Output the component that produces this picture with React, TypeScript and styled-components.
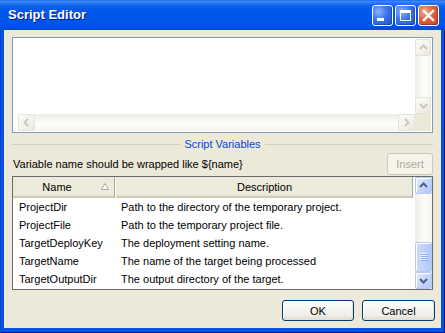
import React from "react";
import styled, { createGlobalStyle } from "styled-components";

const Global = createGlobalStyle`
  html, body { margin: 0; padding: 0; width: 445px; height: 333px; overflow: hidden; background: #fff; }
  * { box-sizing: border-box; }
`;

const Window = styled.div`
  width: 445px;
  height: 333px;
  display: flex;
  flex-direction: column;
  font-family: "Liberation Sans", Arial, sans-serif;
  font-size: 11px;
  color: #000;
`;

const TitleBar = styled.div`
  flex: 0 0 30px;
  display: flex;
  align-items: center;
  gap: 2px;
  padding: 0 6px 0 8px;
  background: linear-gradient(
    to bottom,
    #0a5ae6 0px,
    #3e8ef6 1px,
    #2a78f0 3px,
    #0f61ea 6px,
    #0058ee 10px,
    #0055e8 22px,
    #0050e0 27px,
    #0046d4 30px
  );
`;

const Title = styled.div`
  flex: 1;
  color: #fff;
  font-family: "Liberation Sans", Arial, sans-serif;
  font-weight: bold;
  font-size: 13px;
  text-shadow: 1px 1px 0 #0a1883;
  padding-bottom: 1px;
`;

const CaptionButton = styled.div<{ $close?: boolean }>`
  width: 21px;
  height: 21px;
  border: 1px solid #fff;
  border-radius: 3px;
  display: flex;
  align-items: center;
  justify-content: center;
  background: ${(p) =>
    p.$close
      ? "radial-gradient(circle at 30% 30%, #f3ae95 0%, #e2603a 45%, #c8401c 100%)"
      : "radial-gradient(circle at 30% 30%, #8cb2ff 0%, #3a74f0 45%, #1c50d6 100%)"};
  box-shadow: inset -1px -1px 0 rgba(0, 0, 60, 0.25);
`;

const Frame = styled.div`
  flex: 1;
  display: flex;
  padding: 0 4px 5px 4px;
  background: #0553e4;
  box-shadow: inset 1px 0 0 #0a3fd0, inset -1px 0 0 #00138c, inset 0 -1px 0 #00138c;
`;

const Client = styled.div`
  flex: 1;
  display: flex;
  flex-direction: column;
  background: #ece9d8;
  padding: 7px 8px;
`;

const EditorBox = styled.div`
  flex: 0 0 96px;
  border: 1px solid #7f9db9;
  background: #fff;
  padding: 1px;
  display: grid;
  grid-template-columns: 1fr 16px;
  grid-template-rows: 1fr 17px;
`;

const TextArea = styled.div`
  background: #fff;
`;

const Corner = styled.div`
  background: #ece9d8;
`;

const VScroll = styled.div`
  display: flex;
  flex-direction: column;
  background: linear-gradient(to right, #eeede5, #fdfdfb 60%, #f5f4ef);
`;

const HScroll = styled.div`
  margin-left: 4px;
  display: flex;
  background: linear-gradient(to bottom, #eeede5, #fdfdfb 60%, #f5f4ef);
`;

const Track = styled.div`
  flex: 1;
  display: flex;
  flex-direction: column;
  justify-content: flex-end;
`;

const ScrollBtn = styled.div<{ $disabled?: boolean; $w: number; $h: number }>`
  flex: 0 0 auto;
  width: ${(p) => p.$w}px;
  height: ${(p) => p.$h}px;
  border-radius: 2px;
  display: flex;
  align-items: center;
  justify-content: center;
  border: 1px solid ${(p) => (p.$disabled ? "#e6e4d9" : "#b7caf5")};
  background: ${(p) =>
    p.$disabled
      ? "linear-gradient(135deg, #fbfbf8 0%, #f2f1ea 60%, #e9e7dc 100%)"
      : "linear-gradient(135deg, #e6eefe 0%, #c6d7fc 50%, #b3c8f5 100%)"};
  box-shadow: ${(p) => (p.$disabled ? "none" : "inset 1px 1px 0 #fff")};
`;

const Thumb = styled.div`
  flex: 0 0 30px;
  border: 1px solid #b7caf5;
  border-radius: 2px;
  background: linear-gradient(to right, #cbdafc 0%, #c1d3fb 50%, #b3c8f5 100%);
  box-shadow: inset 1px 1px 0 #fff;
  display: flex;
  align-items: center;
  justify-content: center;
  margin-bottom: 0;
`;

const Separator = styled.div`
  flex: 0 0 13px;
  margin: 5px 0 2px;
  display: flex;
  align-items: center;
  gap: 4px;
  &::before,
  &::after {
    content: "";
    flex: 1;
    height: 1px;
    background: #d0d0bf;
  }
`;

const SepLabel = styled.span`
  color: #0046d5;
  font-size: 11px;
  line-height: 13px;
`;

const HintRow = styled.div`
  flex: 0 0 22px;
  margin-bottom: 1px;
  display: flex;
  align-items: center;
  justify-content: space-between;
  padding-left: 1px;
`;

const XPButton = styled.div<{ $disabled?: boolean; $w: number; $h: number }>`
  width: ${(p) => p.$w}px;
  height: ${(p) => p.$h}px;
  border-radius: 3px;
  display: flex;
  align-items: center;
  justify-content: center;
  font-size: 11px;
  border: 1px solid ${(p) => (p.$disabled ? "#cac8bb" : "#003c74")};
  color: ${(p) => (p.$disabled ? "#aca899" : "#000")};
  background: ${(p) =>
    p.$disabled
      ? "#f5f4ea"
      : "linear-gradient(to bottom, #ffffff 0%, #f7f7f4 35%, #efeee8 75%, #dedacd 100%)"};
  box-shadow: ${(p) =>
    p.$disabled ? "none" : "inset -1px -1px 0 #e3e0d2, inset 1px 1px 0 #fff"};
`;

const ListView = styled.div`
  flex: 0 0 114px;
  border: 1px solid #6b6b6b;
  background: #fff;
  display: grid;
  grid-template-columns: 1fr 17px;
  overflow: hidden;
`;

const ListMain = styled.div`
  display: flex;
  flex-direction: column;
  min-width: 0;
`;

const Header = styled.div`
  flex: 0 0 21px;
  display: flex;
  background: #ebeadb;
  box-shadow: inset 0 -1px 0 #cbc7b8, inset 0 -2px 0 #d6d2c2, inset 0 -3px 0 #e2decd;
`;

const HeaderCell = styled.div<{ $w?: number }>`
  ${(p) => (p.$w ? `flex: 0 0 ${p.$w}px;` : "flex: 1;")}
  display: flex;
  align-items: center;
  justify-content: center;
  gap: 0;
  position: relative;
  padding-bottom: 2px;
  border-right: 1px solid #fff;
  box-shadow: inset -1px 0 0 #aca899;
  clip-path: inset(0 0 0 0);
`;

const HeaderLabel = styled.span`
  flex: 1;
  text-align: center;
`;

const SortMark = styled.span`
  flex: 0 0 auto;
  display: flex;
  margin-right: 6px;
`;

const Row = styled.div`
  flex: 0 0 18px;
  display: flex;
  align-items: center;
`;

const NameCell = styled.div`
  flex: 0 0 103px;
  padding-left: 6px;
  white-space: nowrap;
`;

const DescCell = styled.div`
  flex: 1;
  padding-left: 5px;
  white-space: nowrap;
`;

const ListScroll = styled.div`
  display: flex;
  flex-direction: column;
  background: linear-gradient(to right, #eeede5, #fdfdfb 60%, #f5f4ef);
`;

const Footer = styled.div`
  flex: 0 0 21px;
  margin-top: 10px;
  margin-right: -2px;
  display: flex;
  justify-content: flex-end;
  gap: 8px;
`;

type Dir = "up" | "down" | "left" | "right";

const Chevron: React.FC<{ dir: Dir; color: string }> = ({ dir, color }) => {
  const pts: Record<Dir, string> = {
    up: "1,6 4.5,2.5 8,6",
    down: "1,3 4.5,6.5 8,3",
    left: "6,1 2.5,4.5 6,8",
    right: "3,1 6.5,4.5 3,8",
  };
  return (
    <svg width="9" height="9" viewBox="0 0 9 9">
      <polyline points={pts[dir]} fill="none" stroke={color} strokeWidth="2" />
    </svg>
  );
};

const Grip = () => (
  <svg width="8" height="8" viewBox="0 0 8 8">
    {[0, 2, 4, 6].map((y) => (
      <g key={y}>
        <rect x="0" y={y} width="7" height="1" fill="#eef4fe" />
        <rect x="1" y={y + 1} width="7" height="1" fill="#8cb0f8" />
      </g>
    ))}
  </svg>
);

const rows = [
  ["ProjectDir", "Path to the directory of the temporary project."],
  ["ProjectFile", "Path to the temporary project file."],
  ["TargetDeployKey", "The deployment setting name."],
  ["TargetName", "The name of the target being processed"],
  ["TargetOutputDir", "The output directory of the target."],
];

export default function App() {
  const dis = "#cac8bb";
  const blue = "#4d6185";
  return (
    <>
      <Global />
      <Window>
        <TitleBar>
          <Title>Script Editor</Title>
          <CaptionButton>
            <svg width="19" height="19" viewBox="0 0 19 19">
              <rect x="4" y="12" width="7" height="3" fill="#fff" />
            </svg>
          </CaptionButton>
          <CaptionButton>
            <svg width="19" height="19" viewBox="0 0 19 19">
              <rect x="4.5" y="4.5" width="10" height="10" fill="none" stroke="#fff" strokeWidth="1" />
              <rect x="4" y="4" width="11" height="3" fill="#fff" />
            </svg>
          </CaptionButton>
          <CaptionButton $close>
            <svg width="19" height="19" viewBox="0 0 19 19">
              <path d="M5 5 L14 14 M14 5 L5 14" stroke="#fff" strokeWidth="2.4" strokeLinecap="square" />
            </svg>
          </CaptionButton>
        </TitleBar>
        <Frame>
          <Client>
            <EditorBox>
              <TextArea />
              <VScroll>
                <ScrollBtn $disabled $w={16} $h={17}>
                  <Chevron dir="up" color={dis} />
                </ScrollBtn>
                <Track />
                <ScrollBtn $disabled $w={16} $h={17}>
                  <Chevron dir="down" color={dis} />
                </ScrollBtn>
              </VScroll>
              <HScroll>
                <ScrollBtn $disabled $w={17} $h={17}>
                  <Chevron dir="left" color={dis} />
                </ScrollBtn>
                <Track />
                <ScrollBtn $disabled $w={17} $h={17}>
                  <Chevron dir="right" color={dis} />
                </ScrollBtn>
              </HScroll>
              <Corner />
            </EditorBox>

            <Separator>
              <SepLabel>Script Variables</SepLabel>
            </Separator>

            <HintRow>
              <span>Variable name should be wrapped like ${"{name}"}</span>
              <XPButton $disabled $w={46} $h={22}>
                Insert
              </XPButton>
            </HintRow>

            <ListView>
              <ListMain>
                <Header>
                  <HeaderCell $w={103}>
                    <HeaderLabel>Name</HeaderLabel>
                    <SortMark>
                      <svg width="8" height="7" viewBox="0 0 8 7">
                        <polygon points="4,0.5 7.5,6.5 0.5,6.5" fill="#fff" stroke="#aca899" strokeWidth="1" />
                      </svg>
                    </SortMark>
                  </HeaderCell>
                  <HeaderCell $w={298}>
                    <HeaderLabel>Description</HeaderLabel>
                  </HeaderCell>
                  <HeaderCell />
                </Header>
                {rows.map(([n, d]) => (
                  <Row key={n}>
                    <NameCell>{n}</NameCell>
                    <DescCell>{d}</DescCell>
                  </Row>
                ))}
              </ListMain>
              <ListScroll>
                <ScrollBtn $w={17} $h={17}>
                  <Chevron dir="up" color={blue} />
                </ScrollBtn>
                <Track>
                  <Thumb>
                    <Grip />
                  </Thumb>
                </Track>
                <ScrollBtn $w={17} $h={17}>
                  <Chevron dir="down" color={blue} />
                </ScrollBtn>
              </ListScroll>
            </ListView>

            <Footer>
              <XPButton $w={72} $h={21}>OK</XPButton>
              <XPButton $w={73} $h={21}>Cancel</XPButton>
            </Footer>
          </Client>
        </Frame>
      </Window>
    </>
  );
}
